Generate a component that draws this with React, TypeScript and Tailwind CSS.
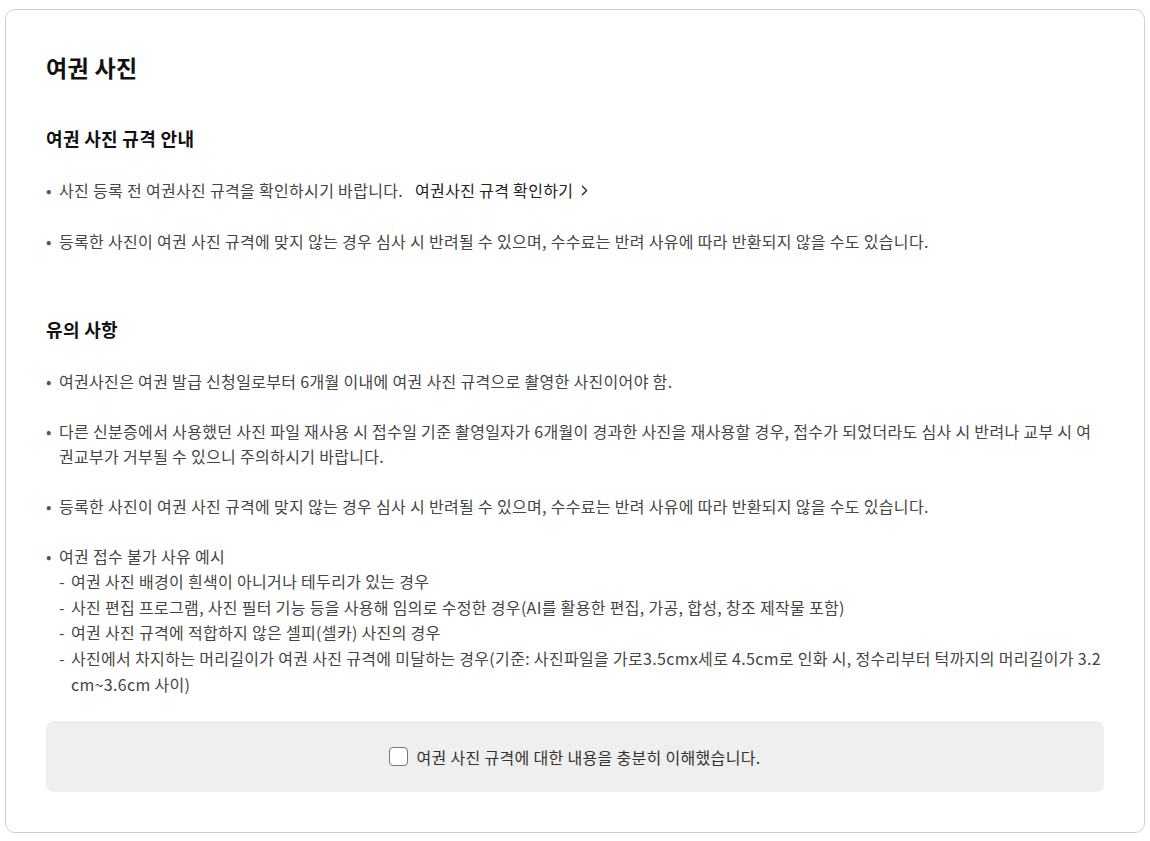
import { ChevronRight } from "lucide-react";

const font = { fontFamily: '"Noto Sans CJK KR", "Noto Sans", sans-serif' };

function Bullet({ children }: { children: React.ReactNode }) {
  return (
    <li className="flex">
      <span className="w-[13px] shrink-0 text-[#555]">•</span>
      <div className="flex-1 break-all">{children}</div>
    </li>
  );
}

function Dash({ children }: { children: React.ReactNode }) {
  return (
    <div className="flex">
      <span className="w-[12px] shrink-0">-</span>
      <span className="flex-1 break-all">{children}</span>
    </div>
  );
}

export default function App() {
  return (
    <div className="min-h-[841px] bg-white pt-[9px] px-[5px] pb-[9px] tracking-[0.02em]" style={font}>
      <div className="w-[1140px] rounded-[10px] border border-[#cfcfcf] bg-white px-10 pt-[41px] pb-10">
        <h1 className="text-[23px] font-bold leading-[32px] text-[#111]">여권 사진</h1>

        <h2 className="mt-[43px] text-[18px] font-bold leading-[25px] text-[#111]">여권 사진 규격 안내</h2>
        <ul className="mt-[27px] flex flex-col gap-[25px] text-[16px] leading-[25.6px] text-[#444]">
          <Bullet>
            사진 등록 전 여권사진 규격을 확인하시기 바랍니다.
            <a className="ml-3 inline-flex items-center text-[#222]">
              여권사진 규격 확인하기
              <ChevronRight className="ml-[3px] h-[17px] w-[17px]" strokeWidth={1.75} />
            </a>
          </Bullet>
          <Bullet>
            등록한 사진이 여권 사진 규격에 맞지 않는 경우 심사 시 반려될 수 있으며, 수수료는 반려 사유에 따라 반환되지 않을 수도 있습니다.
          </Bullet>
        </ul>

        <h2 className="mt-[63px] text-[18px] font-bold leading-[25px] text-[#111]">유의 사항</h2>
        <ul className="mt-[27px] flex flex-col gap-[24px] text-[16px] leading-[25.6px] text-[#444]">
          <Bullet>여권사진은 여권 발급 신청일로부터 6개월 이내에 여권 사진 규격으로 촬영한 사진이어야 함.</Bullet>
          <Bullet>
            다른 신분증에서 사용했던 사진 파일 재사용 시 접수일 기준 촬영일자가 6개월이 경과한 사진을 재사용할 경우, 접수가 되었더라도 심사 시 반려나 교부 시 여권교부가 거부될 수 있으니 주의하시기 바랍니다.
          </Bullet>
          <Bullet>
            등록한 사진이 여권 사진 규격에 맞지 않는 경우 심사 시 반려될 수 있으며, 수수료는 반려 사유에 따라 반환되지 않을 수도 있습니다.
          </Bullet>
          <Bullet>
            <div>여권 접수 불가 사유 예시</div>
            <Dash>여권 사진 배경이 흰색이 아니거나 테두리가 있는 경우</Dash>
            <Dash>사진 편집 프로그램, 사진 필터 기능 등을 사용해 임의로 수정한 경우(AI를 활용한 편집, 가공, 합성, 창조 제작물 포함)</Dash>
            <Dash>여권 사진 규격에 적합하지 않은 셀피(셀카) 사진의 경우</Dash>
            <Dash>
              사진에서 차지하는 머리길이가 여권 사진 규격에 미달하는 경우(기준: 사진파일을 가로3.5cmx세로 4.5cm로 인화 시, 정수리부터 턱까지의 머리길이가 3.2cm~3.6cm 사이)
            </Dash>
          </Bullet>
        </ul>

        <label className="mt-[24px] flex h-[71px] items-center justify-center gap-2 rounded-[8px] bg-[#efefef] text-[16px] text-[#333]">
          <span className="h-[19px] w-[19px] rounded-[4px] border border-[#767676] bg-white" />
          여권 사진 규격에 대한 내용을 충분히 이해했습니다.
        </label>
      </div>
    </div>
  );
}
